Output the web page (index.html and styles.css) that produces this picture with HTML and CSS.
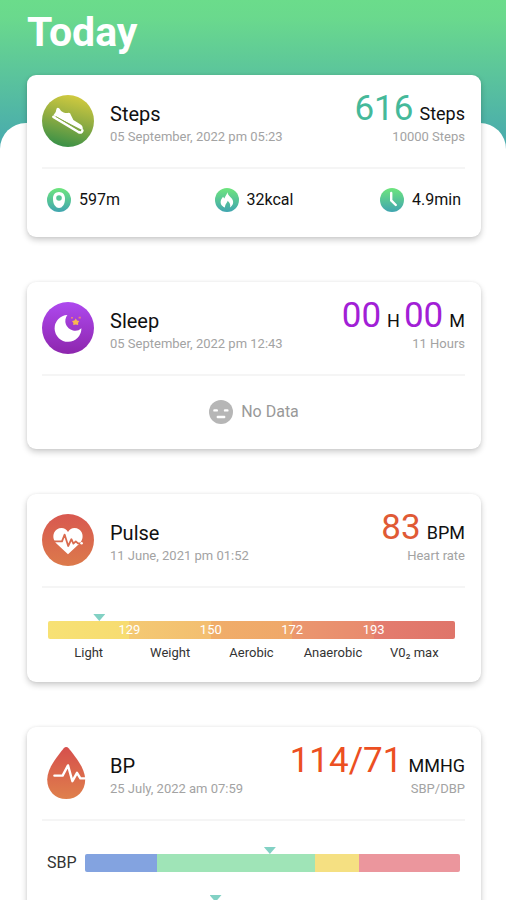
FILE: index.html
```html
<!DOCTYPE html>
<html lang="en">
<head>
<meta charset="utf-8">
<meta name="viewport" content="width=device-width, initial-scale=1">
<title>Today</title>
<link rel="stylesheet" href="styles.css">
</head>
<body>
<header class="hero"><h1>Today</h1></header>
<main class="sheet">
  <div class="cards">
    <section class="card">
      <div class="head">
        <svg class="badge" viewBox="0 0 52 52" aria-hidden="true">
          <defs><linearGradient id="g-steps" x1=".65" y1="0" x2=".4" y2="1"><stop offset="0" stop-color="#d3cb3f"/><stop offset=".5" stop-color="#8dab42"/><stop offset="1" stop-color="#389047"/></linearGradient></defs>
          <circle cx="26" cy="26" r="26" fill="url(#g-steps)"/>
          <path d="M14.6 13.6Q15.6 11.8 17.4 13.4Q18.6 16.4 21.6 17.4Q24.4 18.6 26.6 17.8Q28.4 17.8 29 20.2L31.4 25L38.6 29.6Q41.4 31.4 40.6 35.2L11.4 20.2Q14.4 17.4 14.6 13.6Z" fill="#fff"/>
          <path d="M11.4 21.8L36.4 37Q39.4 38.6 40.4 35.6" fill="none" stroke="#fff" stroke-width="2.6" stroke-linecap="round" stroke-linejoin="round"/>
          <path d="M14 21.6L37 34.8" fill="none" stroke="#86a844" stroke-width="0.9"/>
        </svg>
        <div class="name"><h2>Steps</h2><p>05 September, 2022 pm 05:23</p></div>
        <div class="value"><div class="reading"><span class="num teal">616</span><span class="unit">Steps</span></div><p>10000 Steps</p></div>
      </div>
      <ul class="metrics">
        <li>
          <svg class="mini" viewBox="0 0 24 24" aria-hidden="true"><defs><linearGradient id="g-mini" x1="0" y1="0" x2="0" y2="1"><stop offset="0" stop-color="#6ee57d"/><stop offset="1" stop-color="#40a5b0"/></linearGradient></defs><circle cx="12" cy="12" r="12" fill="url(#g-mini)"/><path d="M12 4C8.2 4 6 6.8 6 10.4C6 13.2 6.4 15.4 7.8 17.4Q9.6 20 12 20T16.2 17.4C17.6 15.4 18 13.2 18 10.4C18 6.8 15.8 4 12 4Z" fill="#fff"/><circle cx="12" cy="10" r="2.8" fill="#58c695"/></svg>597m
        </li>
        <li>
          <svg class="mini" viewBox="0 0 24 24" aria-hidden="true"><circle cx="12" cy="12" r="12" fill="url(#g-mini)"/><path d="M12.4 4.2C12.8 7.4 15.2 8.2 17 10.8C19 13.8 18.4 17.4 15 19.4C15.8 16.6 14.8 14.6 12.6 12.8C12.4 14.8 10 16 10 19.6C6 18.2 4.8 14.8 6.2 11.6L8 8.8L9.4 10.6C10 8.2 11.8 6.8 12.4 4.2Z" fill="#fff"/></svg>32kcal
        </li>
        <li>
          <svg class="mini" viewBox="0 0 24 24" aria-hidden="true"><circle cx="12" cy="12" r="12" fill="url(#g-mini)"/><path d="M11.2 5V12.4L15.8 17" fill="none" stroke="#fff" stroke-width="2.4" stroke-linecap="round"/></svg>4.9min
        </li>
      </ul>
    </section>

    <section class="card">
      <div class="head">
        <svg class="badge" viewBox="0 0 52 52" aria-hidden="true">
          <defs><linearGradient id="g-sleep" x1="0" y1="0" x2="0" y2="1"><stop offset="0" stop-color="#ae49ef"/><stop offset="1" stop-color="#8d26ad"/></linearGradient></defs>
          <circle cx="26" cy="26" r="26" fill="url(#g-sleep)"/>
          <path d="M25.4 13A13.4 13.4 0 1 0 39.4 26.2A9 9 0 0 1 31 28.4A9.6 9.6 0 0 1 25.4 13Z" fill="#fff"/>
          <path d="M33.8 16.4L35 18.4L37.2 19L36 21L36.2 23L33.8 22.4L31.2 23L31.4 21L30 19L32.4 18.4Z" fill="#f8b850"/>
          <path d="M29 15.8h2M36.6 15.6h2.2" stroke="#ee8078" stroke-width="1.6"/>
        </svg>
        <div class="name"><h2>Sleep</h2><p>05 September, 2022 pm 12:43</p></div>
        <div class="value"><div class="reading"><span class="num purple">00</span><span class="unit mid">H</span><span class="num purple">00</span><span class="unit">M</span></div><p>11 Hours</p></div>
      </div>
      <div class="empty">
        <svg class="mini" viewBox="0 0 24 24" aria-hidden="true"><circle cx="12" cy="12" r="12" fill="#b6b6b6"/><path d="M5.4 10.4h2.4M16 10.4h2.4M8.8 17h6.4" stroke="#fff" stroke-width="2.4" stroke-linecap="round"/></svg>No Data
      </div>
    </section>

    <section class="card">
      <div class="head">
        <svg class="badge" viewBox="0 0 52 52" aria-hidden="true">
          <defs><linearGradient id="g-pulse" x1="0" y1="0" x2="0" y2="1"><stop offset="0" stop-color="#d85850"/><stop offset="1" stop-color="#dc7a4b"/></linearGradient></defs>
          <circle cx="26" cy="26" r="26" fill="url(#g-pulse)"/>
          <path d="M26 40.2L14.4 29.6C10 25.2 10.6 18.4 14.8 15.6C18.8 13 23.6 13.8 26 18C28.4 13.8 33.2 13 37.2 15.6C41.4 18.4 42 25.2 37.6 29.6Z" fill="#fff"/>
          <path d="M11 27.4H20L22.6 20.6L26.2 32L29.4 25.2L31.4 29.6L33.8 27.4L36 29.4H39" fill="none" stroke="#d96a4e" stroke-width="1.8" stroke-linejoin="round"/>
          <circle cx="39.6" cy="29.2" r="1.3" fill="#fff"/>
        </svg>
        <div class="name"><h2>Pulse</h2><p>11 June, 2021 pm 01:52</p></div>
        <div class="value"><div class="reading"><span class="num orange">83</span><span class="unit">BPM</span></div><p>Heart rate</p></div>
      </div>
      <div class="zones">
        <div class="track">
          <i class="marker" style="left:12.6%"></i>
          <div class="bar">
            <span class="z1"></span><span class="z2"></span><span class="z3"></span><span class="z4"></span><span class="z5"></span>
          </div>
          <div class="limits"><span>129</span><span>150</span><span>172</span><span>193</span></div>
        </div>
        <div class="labels"><span>Light</span><span>Weight</span><span>Aerobic</span><span>Anaerobic</span><span>V0₂ max</span></div>
      </div>
    </section>

    <section class="card">
      <div class="head">
        <svg class="badge" viewBox="0 0 52 52" aria-hidden="true">
          <defs><linearGradient id="g-bp" x1="0" y1="0" x2="0" y2="1"><stop offset="0" stop-color="#d64f4c"/><stop offset="1" stop-color="#df804c"/></linearGradient></defs>
          <path d="M24.2 0Q25.6 0 26.6 1.2C33.6 9.6 43.2 22 43.2 32.4C43.2 44 35 52 24.2 52S5.2 44 5.2 32.4C5.2 22 14.8 9.6 21.8 1.2Q22.8 0 24.2 0Z" fill="url(#g-bp)"/>
          <path d="M12.4 28.6H20.6L26 18.4L30.4 34.2L35 25.8L38.4 31.4H43.6" fill="none" stroke="#fff" stroke-width="2.4" stroke-linecap="round" stroke-linejoin="round"/>
        </svg>
        <div class="name"><h2>BP</h2><p>25 July, 2022 am 07:59</p></div>
        <div class="value"><div class="reading"><span class="num red">114/71</span><span class="unit">MMHG</span></div><p>SBP/DBP</p></div>
      </div>
      <div class="pressure">
        <div class="row-label">SBP</div>
        <div class="track"><i class="marker" style="left:49.3%"></i><div class="bar levels"><span class="low"></span><span class="normal"></span><span class="raised"></span><span class="high"></span></div></div>
        <div class="row-label"></div>
        <div class="track"><i class="marker" style="left:34.8%"></i><div class="bar levels"><span class="low"></span><span class="normal"></span><span class="raised"></span><span class="high"></span></div></div>
      </div>
    </section>
  </div>
</main>
</body>
</html>
```
FILE: styles.css
```css
* { box-sizing: border-box; }

body {
  margin: 0;
  background: #fff;
  color: #111;
  font-family: Roboto, "Liberation Sans", sans-serif;
}

h1, h2, p, ul { margin: 0; padding: 0; }

.hero {
  padding: 8px 25px 93px 27px;
  background: linear-gradient(#6bdc8b 0, #6ad98d 18px, #48aaae 146px);
}

h1 {
  color: #fff;
  font-size: 41px;
  line-height: 48px;
  font-weight: 700;
}

.sheet {
  margin-top: -26px;
  padding: 0 25px 45px 27px;
  border-radius: 26px 26px 0 0;
  background: #fff;
}

.cards {
  display: flex;
  flex-direction: column;
  gap: 45px;
  position: relative;
  top: -48px;
}

.card {
  border-radius: 9px;
  background: #fff;
  box-shadow: 0 3px 6px rgba(0, 0, 0, 0.2), 0 0 3px rgba(0, 0, 0, 0.06);
}

.head {
  display: flex;
  align-items: flex-end;
  margin: 0 16px 0 15px;
  padding: 13px 0 20px;
  border-bottom: 2px solid #f5f5f5;
}

.badge { flex: none; width: 52px; height: 52px; }

.name {
  flex: 1;
  padding: 0 0 2px 16px;
}

h2 {
  margin-bottom: 2px;
  font-size: 20px;
  line-height: 26px;
  font-weight: 400;
}

.head p {
  color: #a3a3a3;
  font-size: 13px;
  line-height: 16px;
}

.value {
  padding-bottom: 2px;
  text-align: right;
}

.reading {
  display: flex;
  align-items: baseline;
  justify-content: flex-end;
}

.num {
  font-size: 35px;
  line-height: 41px;
}

.unit {
  margin-left: 6px;
  font-size: 18px;
  line-height: 20px;
}

.mid { margin-right: 4px; }
.teal { color: #45b99a; }
.purple { color: #a21fd6; }
.orange { color: #e05a35; }
.red { color: #ec4f22; }

.metrics {
  display: grid;
  grid-template-columns: 1fr auto 1fr;
  padding: 19px 20px 25px;
  list-style: none;
}

.metrics li:last-child { justify-self: end; }

.metrics li, .empty {
  display: flex;
  align-items: center;
  gap: 8px;
  font-size: 16px;
  line-height: 24px;
}

.mini { width: 24px; height: 24px; }

.empty {
  justify-content: center;
  padding: 24px 0 25px;
  color: #999;
}

.zones { padding: 33px 26px 20px 21px; }

.track { position: relative; }

.bar {
  display: flex;
  height: 18px;
  overflow: hidden;
  border-radius: 2px;
}

.bar span { flex: 1; }

.marker {
  position: absolute;
  top: -7px;
  width: 12px;
  height: 7px;
  margin-left: -6px;
  background: #82d1c4;
  clip-path: polygon(0 0, 100% 0, 50% 100%);
}

.z1 { background: linear-gradient(90deg, #f7e174, #f7dc71); }
.z2 { background: linear-gradient(90deg, #f4c973, #f3be70); }
.z3 { background: linear-gradient(90deg, #f0ad69, #efa86a); }
.z4 { background: linear-gradient(90deg, #eb976e, #e88a6e); }
.z5 { background: linear-gradient(90deg, #e47c6e, #df756a); }

.limits {
  position: absolute;
  inset: 0 10%;
  display: flex;
  color: #fff;
  font-size: 13px;
  line-height: 18px;
}

.limits span, .labels span {
  flex: 1;
  text-align: center;
}

.labels {
  display: flex;
  margin-top: 5px;
  color: #333;
  font-size: 13px;
  line-height: 18px;
  white-space: nowrap;
}

.pressure {
  display: grid;
  grid-template-columns: 38px 1fr;
  align-items: center;
  row-gap: 30px;
  padding: 33px 21px 28px 20px;
}

.row-label {
  font-size: 16px;
  line-height: 18px;
  color: #333;
}

.levels .low { flex-grow: 72; background: #83a3e0; }
.levels .normal { flex-grow: 158; background: #9fe4b7; }
.levels .raised { flex-grow: 44; background: #f5e082; }
.levels .high { flex-grow: 101; background: #eb969d; }
```
